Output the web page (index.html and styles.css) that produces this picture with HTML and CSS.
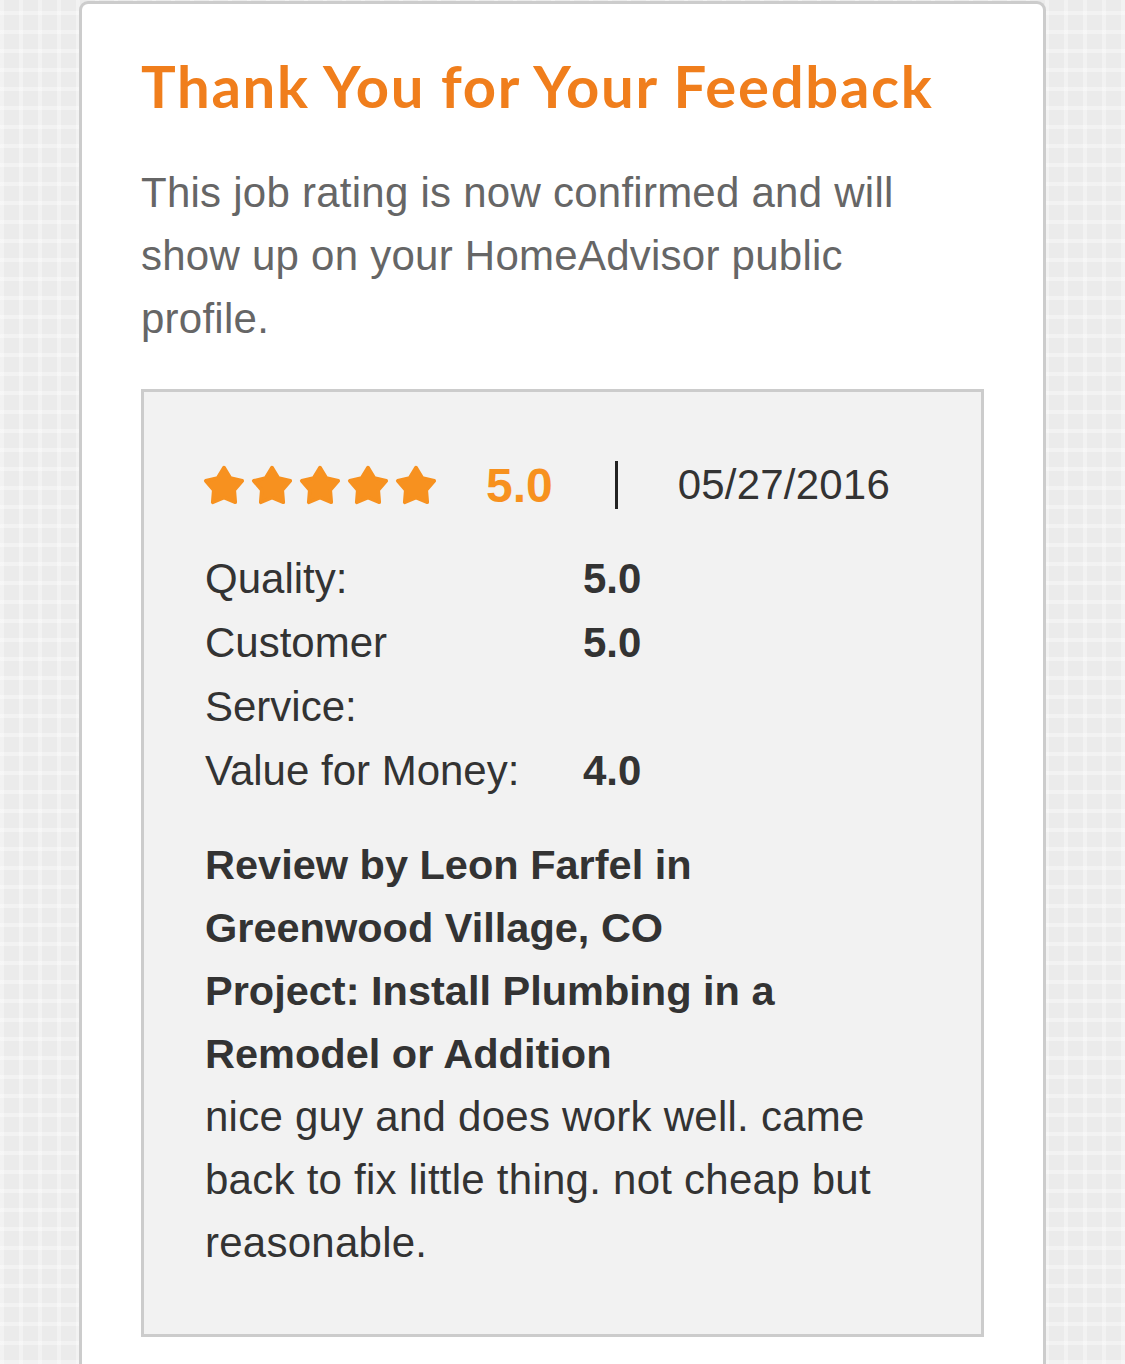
FILE: index.html
```html
<!DOCTYPE html>
<html lang="en">
<head>
    <meta charset="UTF-8">
    <meta name="viewport" content="width=device-width, initial-scale=1.0">
    <title>Thank You for Your Feedback | HomeAdvisor</title>
    <link rel="stylesheet" href="styles.css">
</head>
<body>
    <div class="page">
        <div class="card">
            <h1 class="card-title">Thank You for Your Feedback</h1>
            <p class="card-text">This job rating is now confirmed and will show up on your HomeAdvisor public profile.</p>

            <div class="review">
                <div class="review-head">
                    <div class="stars">
                        <svg class="star" viewBox="0 0 24 24"><path d="M12 2L15.64 7.98 22.46 9.6 17.9 14.92 18.47 21.9 12 19.2 5.53 21.9 6.1 14.92 1.54 9.6 8.36 7.98z"/></svg>
                        <svg class="star" viewBox="0 0 24 24"><path d="M12 2L15.64 7.98 22.46 9.6 17.9 14.92 18.47 21.9 12 19.2 5.53 21.9 6.1 14.92 1.54 9.6 8.36 7.98z"/></svg>
                        <svg class="star" viewBox="0 0 24 24"><path d="M12 2L15.64 7.98 22.46 9.6 17.9 14.92 18.47 21.9 12 19.2 5.53 21.9 6.1 14.92 1.54 9.6 8.36 7.98z"/></svg>
                        <svg class="star" viewBox="0 0 24 24"><path d="M12 2L15.64 7.98 22.46 9.6 17.9 14.92 18.47 21.9 12 19.2 5.53 21.9 6.1 14.92 1.54 9.6 8.36 7.98z"/></svg>
                        <svg class="star" viewBox="0 0 24 24"><path d="M12 2L15.64 7.98 22.46 9.6 17.9 14.92 18.47 21.9 12 19.2 5.53 21.9 6.1 14.92 1.54 9.6 8.36 7.98z"/></svg>
                    </div>
                    <span class="score">5.0</span>
                    <span class="divider"></span>
                    <span class="date">05/27/2016</span>
                </div>

                <div class="ratings">
                    <span class="rating-label">Quality:</span>
                    <span class="rating-value">5.0</span>
                    <span class="rating-label">Customer<br>Service:</span>
                    <span class="rating-value">5.0</span>
                    <span class="rating-label">Value for Money:</span>
                    <span class="rating-value">4.0</span>
                </div>

                <p class="review-meta">Review by Leon Farfel in Greenwood Village, CO</p>
                <p class="review-meta">Project: Install Plumbing in a Remodel or Addition</p>
                <p class="review-body">nice guy and does work well. came back to fix little thing. not cheap but reasonable.</p>
            </div>
        </div>
    </div>
</body>
</html>
```

FILE: styles.css
```css
:root {
    --orange: #f07e1c;
    --star: #f7911f;
    --text: #333333;
    --muted: #666666;
    --line: #cccccc;
    --panel: #f2f2f2;
}

* {
    margin: 0;
    padding: 0;
    box-sizing: border-box;
}

body {
    font-family: 'Liberation Sans', Arial, sans-serif;
    color: var(--text);
    background-color: #ebebeb;
    background-image:
        repeating-linear-gradient(90deg, rgba(255,255,255,0.35) 0 4px, transparent 4px 19px),
        repeating-linear-gradient(0deg, rgba(255,255,255,0.35) 0 4px, transparent 4px 19px);
    height: 1364px;
    overflow: hidden;
}

.page {
    padding: 1px 0 0 79px;
}

.card {
    width: 967px;
    min-height: 1400px;
    background: #ffffff;
    border: 3px solid var(--line);
    border-bottom: none;
    border-radius: 9px 9px 0 0;
    padding: 50px 59px 0 59px;
}

.card-title {
    font-family: Lato, 'Open Sans', sans-serif;
    font-weight: 700;
    font-size: 58px;
    line-height: 64px;
    color: var(--orange);
    letter-spacing: 1.7px;
    margin-bottom: 43px;
}

.card-text {
    max-width: 800px;
    font-size: 42px;
    line-height: 63px;
    letter-spacing: 0.25px;
    color: var(--muted);
    margin-bottom: 39px;
}

.review {
    background: var(--panel);
    border: 3px solid var(--line);
    padding: 63px 96px 60px 61px;
}

.review-head {
    display: flex;
    align-items: center;
    height: 60px;
    margin-bottom: 32px;
}

.review-head > * {
    flex: none;
}

.stars {
    display: flex;
    gap: 6px;
    margin-left: -2px;
}

.star {
    width: 42px;
    height: 42px;
    fill: var(--star);
    stroke: var(--star);
    stroke-width: 2;
    stroke-linejoin: round;
}

.score {
    font-size: 48px;
    font-weight: 700;
    color: var(--star);
    margin-left: 49px;
}

.divider {
    width: 3px;
    height: 48px;
    background: #222222;
    margin: 0 60px 0 62px;
}

.date {
    font-size: 42px;
    letter-spacing: 0.2px;
    color: var(--text);
}

.ratings {
    display: grid;
    grid-template-columns: 378px auto;
    font-size: 42px;
    line-height: 64px;
    margin-bottom: 30px;
}

.rating-value {
    font-weight: 700;
}

.review-meta {
    font-size: 41.5px;
    line-height: 63px;
    font-weight: 700;
}

.review-body {
    font-size: 42px;
    line-height: 63px;
    letter-spacing: 0.25px;
}
```
